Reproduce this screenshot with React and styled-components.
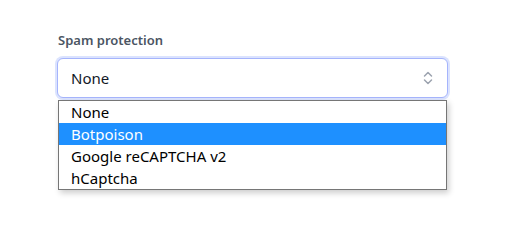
import React from "react";
import styled, { createGlobalStyle } from "styled-components";

const GlobalStyle = createGlobalStyle`
  body {
    margin: 0;
    background: #ffffff;
    font-family: "Noto Sans", "Open Sans", sans-serif;
  }
`;

const options = ["None", "Botpoison", "Google reCAPTCHA v2", "hCaptcha"];

const App = () => {
  return (
    <Page>
      <GlobalStyle />
      <Field>
        <Label>Spam protection</Label>
        <SelectWrap>
          <SelectBox>
            <span>None</span>
            <Chevron viewBox="0 0 12 16" aria-hidden="true">
              <path d="M2.5 6 L6 2.5 L9.5 6" />
              <path d="M2.5 10 L6 13.5 L9.5 10" />
            </Chevron>
          </SelectBox>
          <Menu>
            {options.map((o, i) => (
              <Option key={o} $active={i === 1}>
                {o}
              </Option>
            ))}
          </Menu>
        </SelectWrap>
      </Field>
    </Page>
  );
};

const Page = styled.div`
  width: 506px;
  height: 232px;
  padding: 30px 0 0 57px;
  box-sizing: border-box;
`;

const Field = styled.div`
  width: 391px;
  display: flex;
  flex-direction: column;
  gap: 8px;
`;

const Label = styled.label`
  font-size: 13px;
  font-weight: 600;
  color: #4b5563;
  line-height: 20px;
  padding-left: 1px;
`;

const SelectWrap = styled.div`
  position: relative;
`;

const SelectBox = styled.div`
  height: 40px;
  box-sizing: border-box;
  display: flex;
  align-items: center;
  justify-content: space-between;
  padding: 0 13px 0 13px;
  border: 1px solid #a5b4fc;
  border-radius: 6px;
  box-shadow: 0 0 0 2px #dbe3fe, 0 1px 2px rgba(0, 0, 0, 0.08);
  background: #fff;
  font-size: 15px;
  color: #111827;
`;

const Chevron = styled.svg`
  width: 12px;
  height: 16px;
  fill: none;
  stroke: #9ca3af;
  stroke-width: 1.5;
  stroke-linecap: round;
  stroke-linejoin: round;
`;

const Menu = styled.div`
  position: absolute;
  left: 1px;
  top: 42px;
  width: 389px;
  box-sizing: border-box;
  border: 1px solid #767676;
  background: #fff;
  box-shadow: 2px 3px 6px rgba(0, 0, 0, 0.2);
  padding: 0;
`;

const Option = styled.div`
  height: 22px;
  line-height: 22px;
  padding-left: 12px;
  font-size: 15px;
  color: ${(p) => (p.$active ? "#ffffff" : "#000000")};
  background: ${(p) => (p.$active ? "#1e90ff" : "transparent")};
`;

export default App;
